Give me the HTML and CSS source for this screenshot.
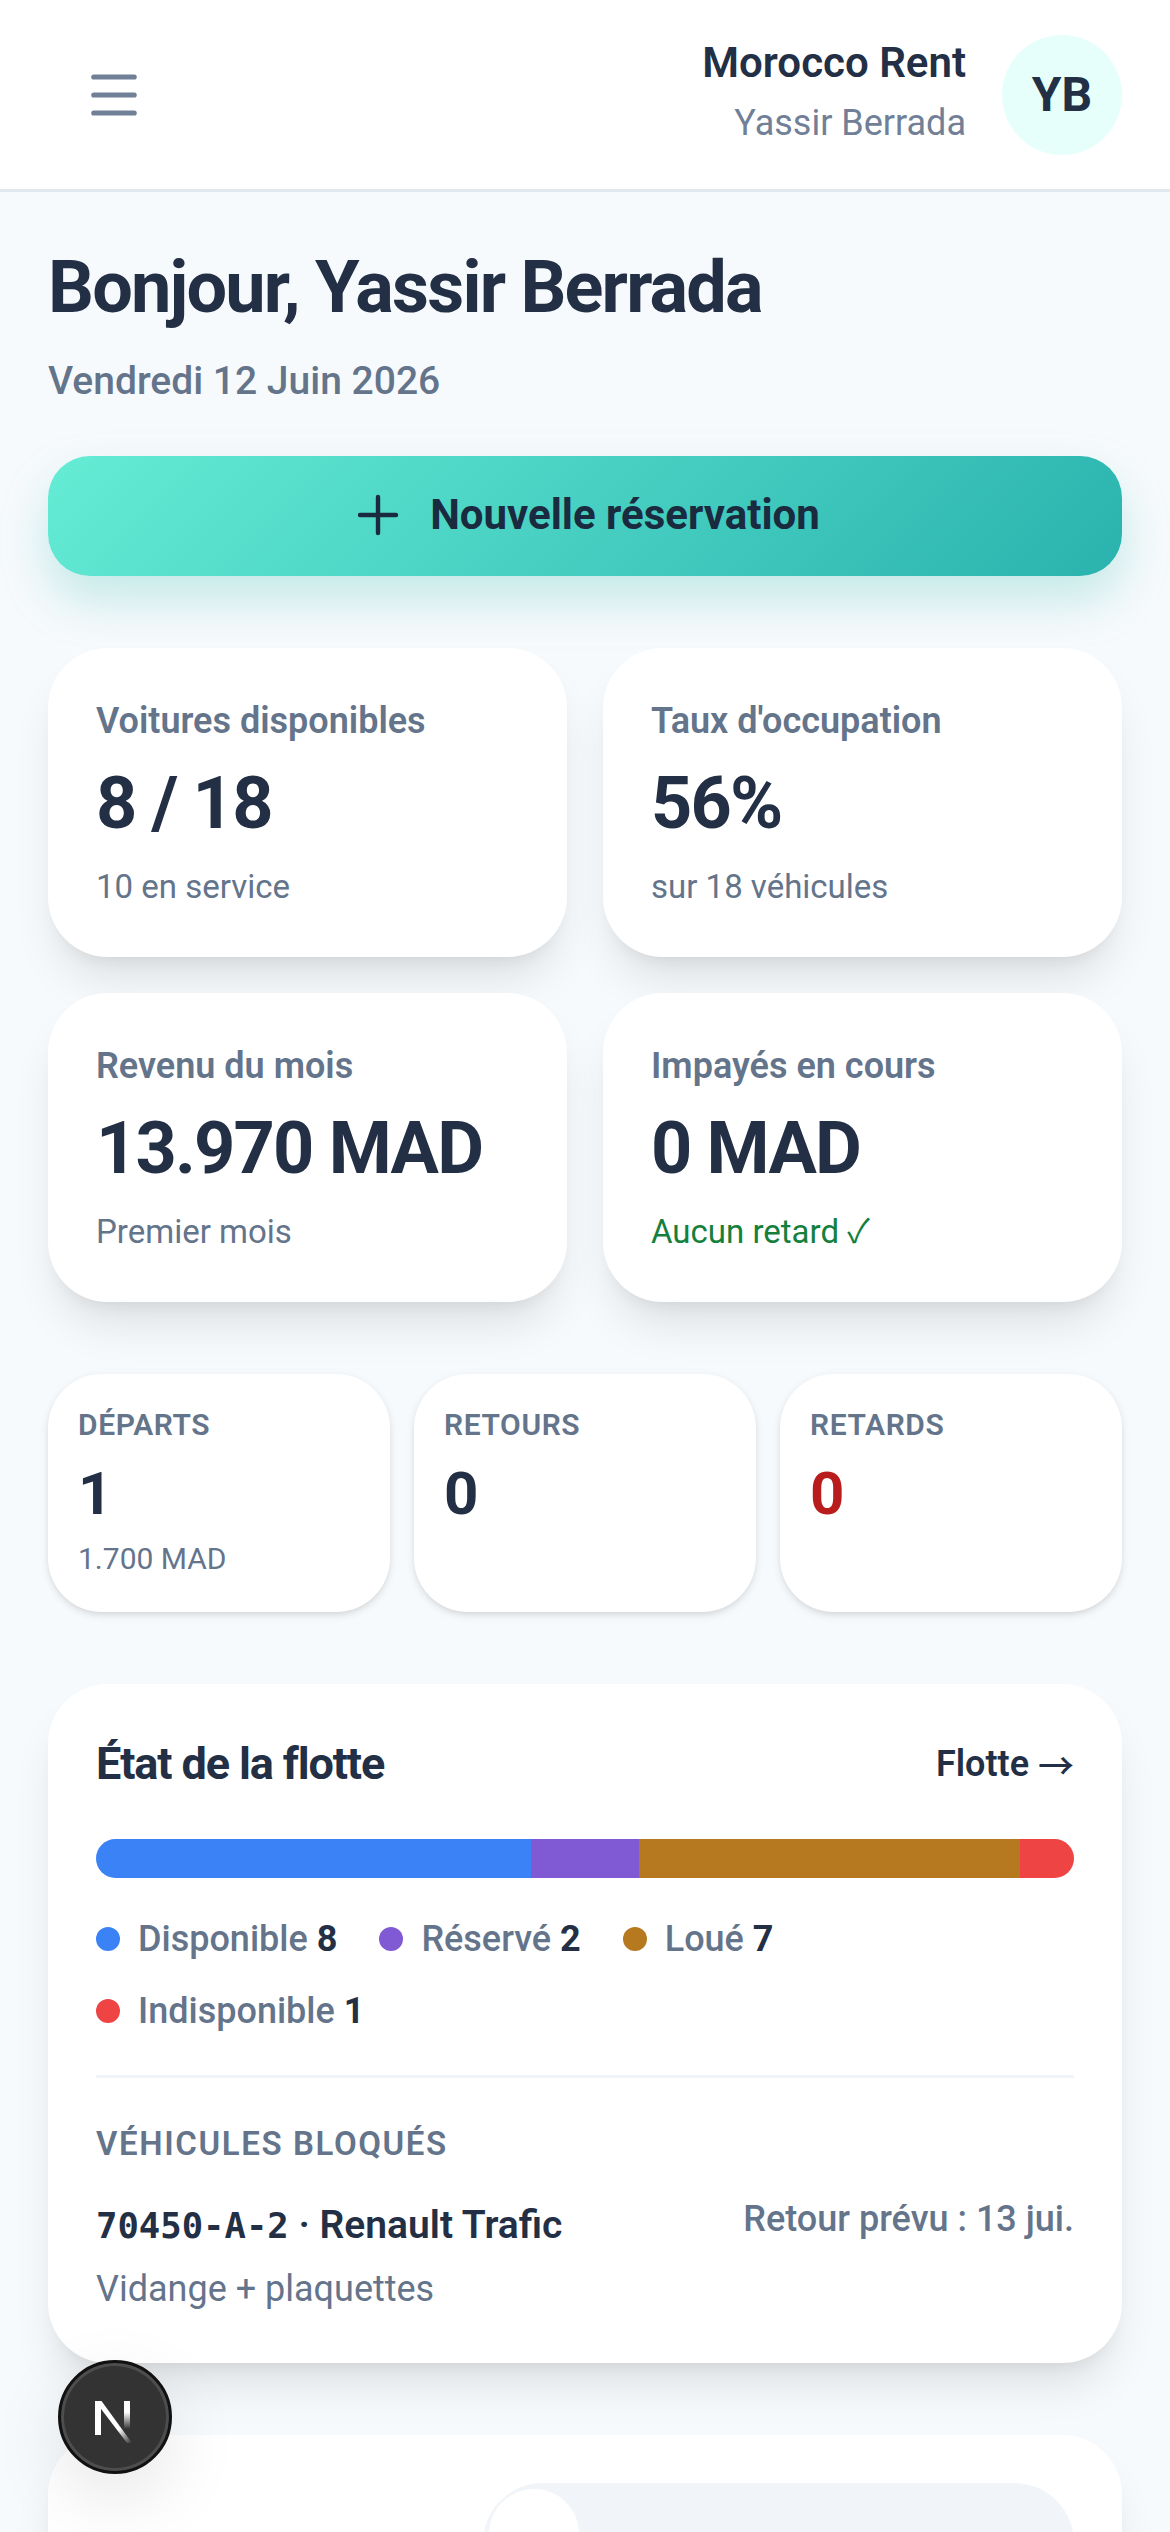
FILE: index.html
```html
<!DOCTYPE html>
<html lang="fr">
<head>
  <meta charset="UTF-8" />
  <meta name="viewport" content="width=device-width, initial-scale=1.0"/>
  <title>Tableau de bord - Morocco Rent</title>
  <link rel="stylesheet" href="styles.css">
</head>
<body>

  <header class="topbar">
    <button class="menu-btn" aria-label="Menu">
      <svg width="72" height="72" viewBox="0 0 24 24" fill="none" stroke="#718096" stroke-width="1.7" stroke-linecap="round">
        <path d="M5.25 6h13.5M5.25 12h13.5M5.25 18h13.5"/>
      </svg>
    </button>
    <div class="account">
      <div class="account-text">
        <div class="account-name">Morocco Rent</div>
        <div class="account-user">Yassir Berrada</div>
      </div>
      <div class="avatar">YB</div>
    </div>
  </header>

  <main class="content">
    <h1>Bonjour, Yassir Berrada</h1>
    <p class="date">Vendredi 12 Juin 2026</p>

    <button class="new-booking">
      <svg width="48" height="48" viewBox="0 0 24 24" fill="none" stroke="#1a2a3f" stroke-width="2.2" stroke-linecap="round">
        <path d="M12 3v18M3 12h18"/>
      </svg>
      Nouvelle réservation
    </button>

    <section class="stats">
      <div class="card stat">
        <div class="stat-label">Voitures disponibles</div>
        <div class="stat-value">8 / 18</div>
        <div class="stat-note">10 en service</div>
      </div>
      <div class="card stat">
        <div class="stat-label">Taux d'occupation</div>
        <div class="stat-value">56%</div>
        <div class="stat-note">sur 18 véhicules</div>
      </div>
      <div class="card stat">
        <div class="stat-label">Revenu du mois</div>
        <div class="stat-value">13.970 MAD</div>
        <div class="stat-note">Premier mois</div>
      </div>
      <div class="card stat">
        <div class="stat-label">Impayés en cours</div>
        <div class="stat-value">0 MAD</div>
        <div class="stat-note ok">Aucun retard <span class="tick">✓</span></div>
      </div>
    </section>

    <section class="today">
      <div class="card mini">
        <div class="mini-label">DÉPARTS</div>
        <div class="mini-value">1</div>
        <div class="mini-note">1.700 MAD</div>
      </div>
      <div class="card mini">
        <div class="mini-label">RETOURS</div>
        <div class="mini-value">0</div>
      </div>
      <div class="card mini">
        <div class="mini-label">RETARDS</div>
        <div class="mini-value late">0</div>
      </div>
    </section>

    <section class="card fleet">
      <div class="fleet-head">
        <h2>État de la flotte</h2>
        <a class="fleet-link">Flotte <span class="arrow">→</span></a>
      </div>
      <div class="fleet-bar">
        <span class="seg blue" style="width: 44.44%"></span>
        <span class="seg purple" style="width: 11.11%"></span>
        <span class="seg brown" style="width: 38.89%"></span>
        <span class="seg red" style="width: 5.56%"></span>
      </div>
      <ul class="legend">
        <li><i class="dot blue"></i>Disponible <b>8</b></li>
        <li><i class="dot purple"></i>Réservé <b>2</b></li>
        <li><i class="dot brown"></i>Loué <b>7</b></li>
        <li><i class="dot red"></i>Indisponible <b>1</b></li>
      </ul>
      <div class="blocked">
        <div class="blocked-title">VÉHICULES BLOQUÉS</div>
        <div class="blocked-row">
          <div>
            <div class="blocked-car"><span class="plate">70450-A-2</span> · Renault Trafic</div>
            <div class="blocked-why">Vidange + plaquettes</div>
          </div>
          <div class="blocked-back">Retour prévu : 13 jui.</div>
        </div>
      </div>
    </section>

    <section class="card next">
      <div class="switch"><span class="switch-thumb"></span></div>
    </section>
  </main>

  <button class="dev-badge" aria-label="Next.js">
    <svg width="60" height="60" viewBox="0 0 60 60" fill="none">
      <defs>
        <linearGradient id="nDiag" x1="24" y1="30" x2="47" y2="56" gradientUnits="userSpaceOnUse">
          <stop offset="0.45" stop-color="#fff"/>
          <stop offset="1" stop-color="#fff" stop-opacity="0"/>
        </linearGradient>
        <linearGradient id="nBar" x1="42" y1="14" x2="42" y2="42" gradientUnits="userSpaceOnUse">
          <stop offset="0.4" stop-color="#fff"/>
          <stop offset="1" stop-color="#fff" stop-opacity="0"/>
        </linearGradient>
      </defs>
      <path d="M10 14h6v34h-6z" fill="#fff"/>
      <path d="M10 14h6.5L47 56h-5z" fill="url(#nDiag)"/>
      <path d="M39 14h6v28h-6z" fill="url(#nBar)"/>
    </svg>
  </button>

</body>
</html>
```

FILE: styles.css
```css
* { box-sizing: border-box; }
html, body { margin: 0; height: 2532px; overflow: hidden; }
body { font-family: Roboto, "Liberation Sans", sans-serif; background: #f7fafc; color: #232f45; }

.topbar {
  display: flex;
  align-items: center;
  justify-content: space-between;
  height: 192px;
  padding: 0 48px;
  background: #fff;
  border-bottom: 3px solid #e2e8f0;
}
.menu-btn { display: flex; padding: 0 0 0 30px; border: none; background: none; }
.account { display: flex; align-items: center; gap: 36px; }
.account-text { text-align: right; padding-bottom: 7px; }
.account-name { font-size: 42px; line-height: 60px; font-weight: 600; }
.account-user { font-size: 36px; line-height: 54px; color: #718096; margin-top: 3px; }
.avatar {
  display: flex;
  align-items: center;
  justify-content: center;
  width: 120px;
  height: 120px;
  border-radius: 50%;
  background: #e6fffa;
  font-size: 48px;
  font-weight: 700;
}

.content { height: 2340px; padding: 51px 48px 0; overflow: hidden; }
h1 { margin: 0; font-size: 72px; line-height: 90px; font-weight: 700; letter-spacing: -1.8px; }
.date { margin: 18px 0 0; font-size: 39px; line-height: 60px; font-weight: 500; color: #64748b; }

.new-booking {
  display: flex;
  align-items: center;
  justify-content: center;
  gap: 28px;
  width: 100%;
  height: 120px;
  margin-top: 45px;
  padding: 0 0 3px 4px;
  border: none;
  border-radius: 42px;
  background: linear-gradient(135deg, #64ecd5, #2ab3ae);
  box-shadow: 0 24px 48px rgba(45, 185, 175, 0.25);
  font-family: inherit;
  font-size: 42px;
  font-weight: 700;
  color: #1a2a3f;
}

.card { background: #fff; box-shadow: 0 30px 45px -9px rgba(0, 0, 0, 0.1), 0 12px 18px -12px rgba(0, 0, 0, 0.1); }

.stats { display: grid; grid-template-columns: 1fr 1fr; gap: 36px; margin-top: 72px; }
.stat { height: 309px; padding: 46px 48px; border-radius: 60px; }
.stat-label { font-size: 36px; line-height: 54px; font-weight: 600; color: #64748b; }
.stat-value { font-size: 72px; line-height: 84px; font-weight: 700; letter-spacing: -1.8px; margin-top: 14px; }
.stat-note { font-size: 33px; line-height: 48px; color: #64748b; margin-top: 17px; }
.stat-note.ok { color: #15803d; }
.tick { font-family: "Noto Sans CJK SC", "DejaVu Sans", sans-serif; line-height: 0; }

.today { display: grid; grid-template-columns: repeat(3, 1fr); gap: 24px; margin-top: 72px; }
.card.mini { height: 238px; padding: 30px; border-radius: 54px; box-shadow: 0 3px 9px rgba(0, 0, 0, 0.1), 0 3px 6px -3px rgba(0, 0, 0, 0.1); }
.mini-label { font-size: 30px; line-height: 42px; font-weight: 600; letter-spacing: 0.6px; color: #64748b; }
.mini-value { font-size: 60px; line-height: 72px; font-weight: 700; margin-top: 12px; }
.mini-value.late { color: #b91c1c; }
.mini-note { font-size: 30px; line-height: 42px; color: #64748b; margin-top: 8px; }

.fleet { height: 679px; margin-top: 72px; padding: 48px; border-radius: 60px; }
.fleet-head { display: flex; align-items: center; justify-content: space-between; height: 63px; }
h2 { margin: 0; font-size: 45px; font-weight: 700; letter-spacing: -1.12px; }
.fleet-link { font-size: 36px; font-weight: 600; white-space: nowrap; }
.arrow { font-family: "Noto Sans CJK SC", "Liberation Sans", sans-serif; font-weight: 500; line-height: 0; vertical-align: -4px; }

.fleet-bar { display: flex; height: 39px; margin-top: 44px; border-radius: 20px; overflow: hidden; }
.seg { display: block; height: 100%; }
.blue { background: #3b82f6; }
.purple { background: #805ad5; }
.brown { background: #b7791f; }
.red { background: #ef4444; }

.legend { display: flex; flex-wrap: wrap; gap: 24px 42px; margin: 37px 0 0; padding: 0; list-style: none; }
.legend li { display: flex; align-items: center; font-size: 36px; line-height: 48px; font-weight: 500; color: #64748b; white-space: pre; }
.legend b { font-weight: 700; color: #232f45; }
.dot { width: 24px; height: 24px; border-radius: 50%; margin-right: 18px; }

.blocked { margin-top: 40px; padding-top: 42px; border-top: 3px solid #f1f5f9; }
.blocked-title { font-size: 33px; line-height: 48px; font-weight: 600; letter-spacing: 1.6px; color: #64748b; }
.blocked-row { display: flex; justify-content: space-between; align-items: flex-start; margin-top: 30px; }
.blocked-car { font-size: 39px; line-height: 54px; font-weight: 600; }
.plate { font-family: "DejaVu Sans Mono", monospace; font-weight: 700; font-size: 35.6px; }
.blocked-why { font-size: 36px; line-height: 48px; color: #64748b; margin-top: 12px; }
.blocked-back { font-size: 36px; line-height: 48px; font-weight: 500; color: #64748b; margin-top: -3px; }

.next { display: flex; justify-content: flex-end; height: 300px; margin-top: 72px; padding: 48px; border-radius: 60px; }
.switch { width: 591px; height: 150px; padding: 6px; border-radius: 60px; background: #f1f5f9; }
.switch-thumb { display: block; width: 90px; height: 138px; border-radius: 45px; background: #fff; }

.dev-badge {
  position: fixed;
  left: 58px;
  bottom: 58px;
  display: flex;
  align-items: center;
  justify-content: center;
  width: 114px;
  height: 114px;
  padding: 0;
  border: 3px solid #111;
  border-radius: 50%;
  background: #333;
  box-shadow: inset 0 0 0 3px #4d4d4d, 0 24px 72px rgba(0, 0, 0, 0.1);
}
```
